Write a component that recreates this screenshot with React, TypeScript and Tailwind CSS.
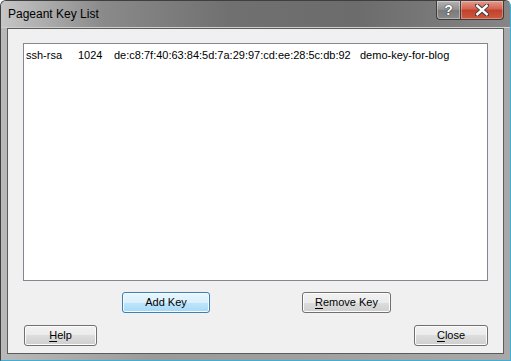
import React from 'react';

const keys = [
    {
        type: 'ssh-rsa',
        bits: '1024',
        fingerprint: 'de:c8:7f:40:63:84:5d:7a:29:97:cd:ee:28:5c:db:92',
        comment: 'demo-key-for-blog',
    },
];

function Button({ children, primary, className }: { children: React.ReactNode; primary?: boolean; className?: string }) {
    return (
        <button
            className={
                'flex h-[21px] items-center justify-center rounded-[3px] border text-[11px] leading-none text-black ' +
                (primary
                    ? 'border-[#3c7fb1] bg-[linear-gradient(#eaf6fd,#d9f0fc_50%,#bee6fd_50%,#a7d9f5)] shadow-[inset_0_0_0_1px_#f4fbff] '
                    : 'border-[#707070] bg-[linear-gradient(#f2f2f2,#ebebeb_50%,#dddddd_50%,#cfcfcf)] shadow-[inset_0_0_0_1px_#fcfcfc] ') +
                (className ?? '')
            }
        >
            {children}
        </button>
    );
}

export default function App() {
    return (
        <div className="h-[361px] w-[511px] bg-white font-['Liberation_Sans',Arial,sans-serif]">
            <div className="flex h-full flex-col rounded-t-[6px] border border-[#3f3f3f] border-b-[#3ab0d8] border-r-[#3ab0d8] bg-[linear-gradient(90deg,#b9b9b9,#9a9a9a_30%,#a2a2a2_70%,#a8a8a8)]">
                {/* title bar */}
                <div className="relative flex h-[27px] shrink-0 items-center rounded-t-[5px] border-b border-[#cfcfcf] bg-[linear-gradient(90deg,#c6c6c6,#8a8a8a_20%,#707070_45%,#6c6c6c_70%,#858585)] pl-[7px]">
                    <span className="text-[12px] text-black">Pageant Key List</span>
                    <div className="absolute right-[6px] top-0 flex h-[19px]">
                        <div className="flex w-[25px] items-center justify-center rounded-bl-[4px] border border-t-0 border-[#3c3c3c] bg-[linear-gradient(#b4b4b4,#8e8e8e_50%,#7a7a7a_50%,#8a8a8a)] shadow-[inset_0_0_0_1px_rgba(255,255,255,0.35)]">
                            <span className="text-[14px] font-bold leading-none text-white [text-shadow:0_0_1px_#222,0_0_1px_#222]">?</span>
                        </div>
                        <div className="flex w-[43px] items-center justify-center rounded-br-[4px] border border-l-0 border-t-0 border-[#3c3c3c] bg-[linear-gradient(#e49a8c,#d2624f_45%,#c0402c_50%,#cf5a40)] shadow-[inset_0_0_0_1px_rgba(255,255,255,0.3)]">
                            <svg width="14" height="12" viewBox="0 0 14 12">
                                <path d="M2 1.5 L12 10.5 M12 1.5 L2 10.5" stroke="#3a3a3a" strokeWidth="4.2" strokeLinecap="round" />
                                <path d="M2.3 1.8 L11.7 10.2 M11.7 1.8 L2.3 10.2" stroke="#ffffff" strokeWidth="2.4" strokeLinecap="square" />
                            </svg>
                        </div>
                    </div>
                </div>

                {/* client area */}
                <div className="mx-[6px] mb-[6px] flex flex-1 flex-col border border-[#5c5c5c] bg-[#f0f0f0] px-[15px] pt-[14px]">
                    <div className="h-[238px] border border-[#828790] bg-white pl-[2px] pt-[3px] text-[11px] text-black">
                        {keys.map((k) => (
                            <div key={k.fingerprint} className="flex h-[17px] items-center whitespace-nowrap">
                                <span className="w-[52px]">{k.type}</span>
                                <span className="w-[36px]">{k.bits}</span>
                                <span className="w-[246px]">{k.fingerprint}</span>
                                <span>{k.comment}</span>
                            </div>
                        ))}
                    </div>

                    <div className="mt-[11px] flex">
                        <Button primary className="ml-[99px] w-[88px]">
                            Add Key
                        </Button>
                        <Button className="ml-[92px] w-[89px]">
                            <span className="underline underline-offset-[2px]">R</span>emove Key
                        </Button>
                    </div>

                    <div className="mt-[12px] flex justify-between">
                        <Button className="ml-[1px] w-[73px]">
                            <span className="underline underline-offset-[2px]">H</span>elp
                        </Button>
                        <Button className="w-[74px]">
                            <span className="underline underline-offset-[2px]">C</span>lose
                        </Button>
                    </div>
                </div>
            </div>
        </div>
    );
}
